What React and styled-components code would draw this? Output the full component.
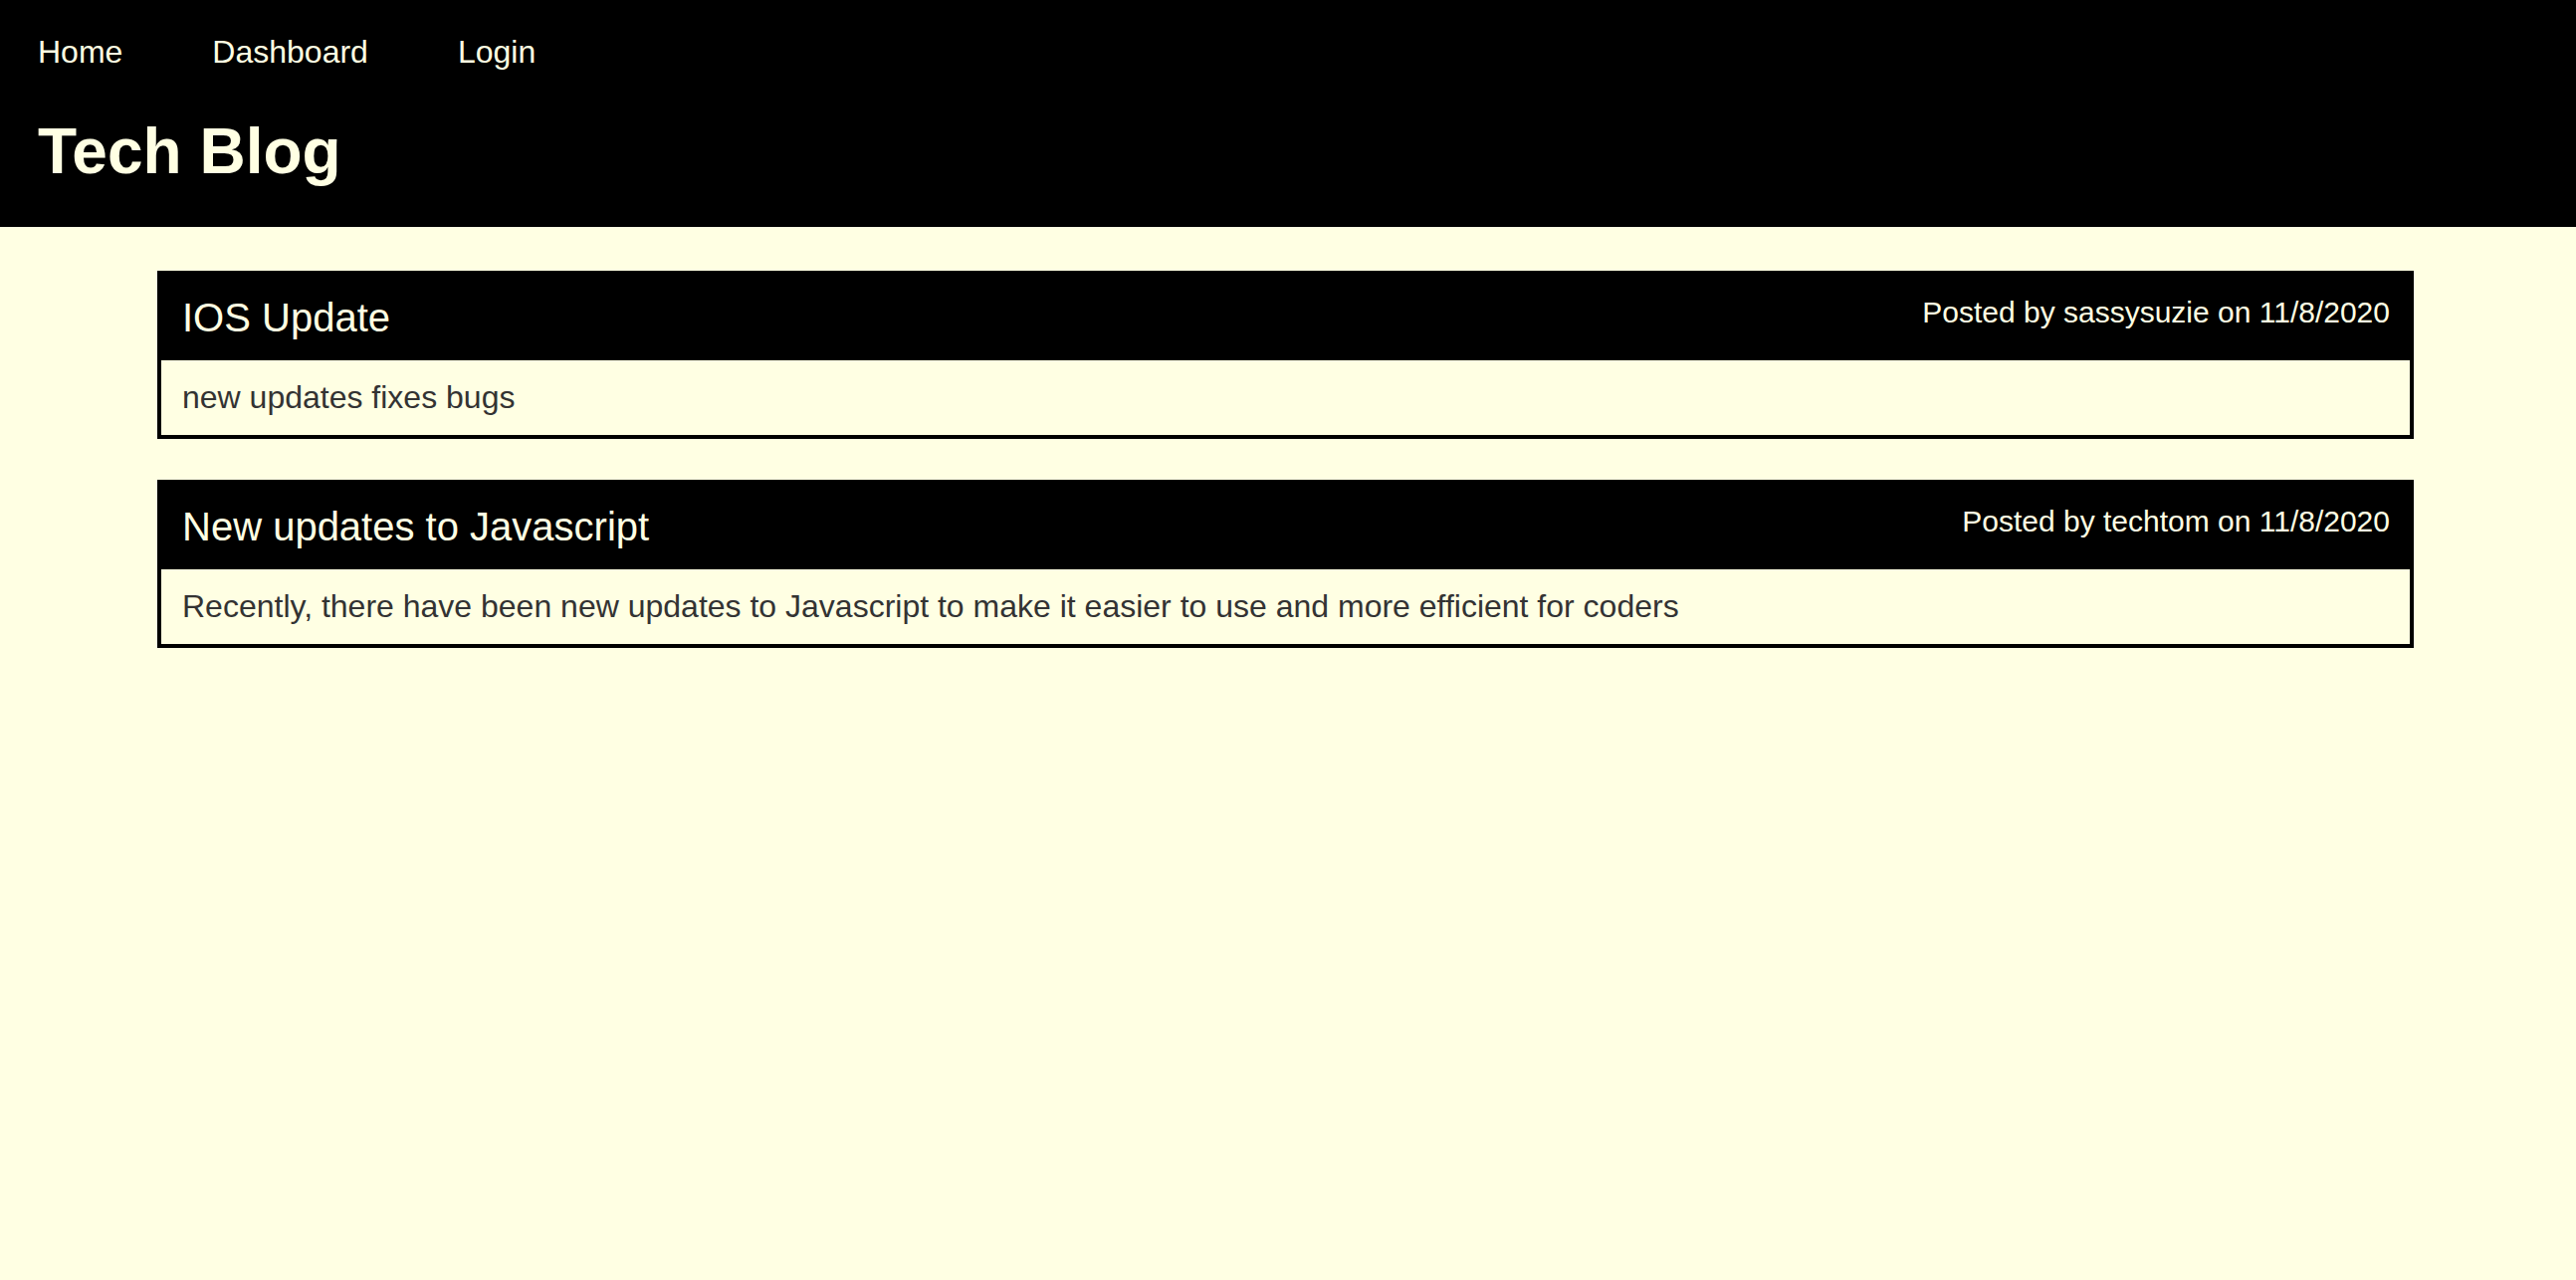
import React from "react";
import styled, { createGlobalStyle } from "styled-components";

const posts = [
  {
    id: 1,
    title: "IOS Update",
    author: "sassysuzie",
    date: "11/8/2020",
    body: "new updates fixes bugs",
  },
  {
    id: 2,
    title: "New updates to Javascript",
    author: "techtom",
    date: "11/8/2020",
    body: "Recently, there have been new updates to Javascript to make it easier to use and more efficient for coders",
  },
];

function App() {
  return (
    <>
      <GlobalStyle />
      <Header>
        <Nav>
          <NavLink href="#">Home</NavLink>
          <NavLink href="#">Dashboard</NavLink>
          <NavLink href="#">Login</NavLink>
        </Nav>
        <Title>Tech Blog</Title>
      </Header>
      <Main>
        {posts.map((post) => (
          <Post key={post.id}>
            <PostHead>
              <PostTitle>{post.title}</PostTitle>
              <PostMeta>
                Posted by {post.author} on {post.date}
              </PostMeta>
            </PostHead>
            <PostBody>{post.body}</PostBody>
          </Post>
        ))}
      </Main>
    </>
  );
}

const GlobalStyle = createGlobalStyle`
  html, body {
    margin: 0;
    padding: 0;
    background-color: #ffffe3;
    font-family: "Liberation Sans", Arial, Helvetica, sans-serif;
    min-height: 100%;
  }
  #root {
    min-height: 100vh;
    background-color: #ffffe3;
  }
`;

const Header = styled.header`
  background-color: #000;
  padding: 34px 38px 39px;
  display: flex;
  flex-direction: column;
  gap: 44px;
`;

const Nav = styled.nav`
  display: flex;
  gap: 90px;
`;

const NavLink = styled.a`
  color: #ffffe3;
  font-size: 32px;
  line-height: 37px;
  text-decoration: none;
`;

const Title = styled.h1`
  margin: 0;
  color: #ffffe3;
  font-size: 64px;
  line-height: 74px;
  font-weight: bold;
`;

const Main = styled.main`
  padding: 44px 163px 0 158px;
  display: flex;
  flex-direction: column;
  gap: 41px;
`;

const Post = styled.article`
  border: 4px solid #000;
`;

const PostHead = styled.div`
  background-color: #000;
  display: flex;
  justify-content: space-between;
  align-items: flex-start;
  padding: 20px 20px 20px 21px;
`;

const PostTitle = styled.h2`
  margin: 0;
  color: #ffffe3;
  font-size: 40px;
  line-height: 46px;
  font-weight: normal;
`;

const PostMeta = styled.span`
  color: #ffffe3;
  font-size: 30px;
  line-height: 34px;
  margin-top: 1px;
`;

const PostBody = styled.p`
  margin: 0;
  padding: 19px 21px;
  color: #333;
  font-size: 32px;
  line-height: 37px;
`;

export default App;
